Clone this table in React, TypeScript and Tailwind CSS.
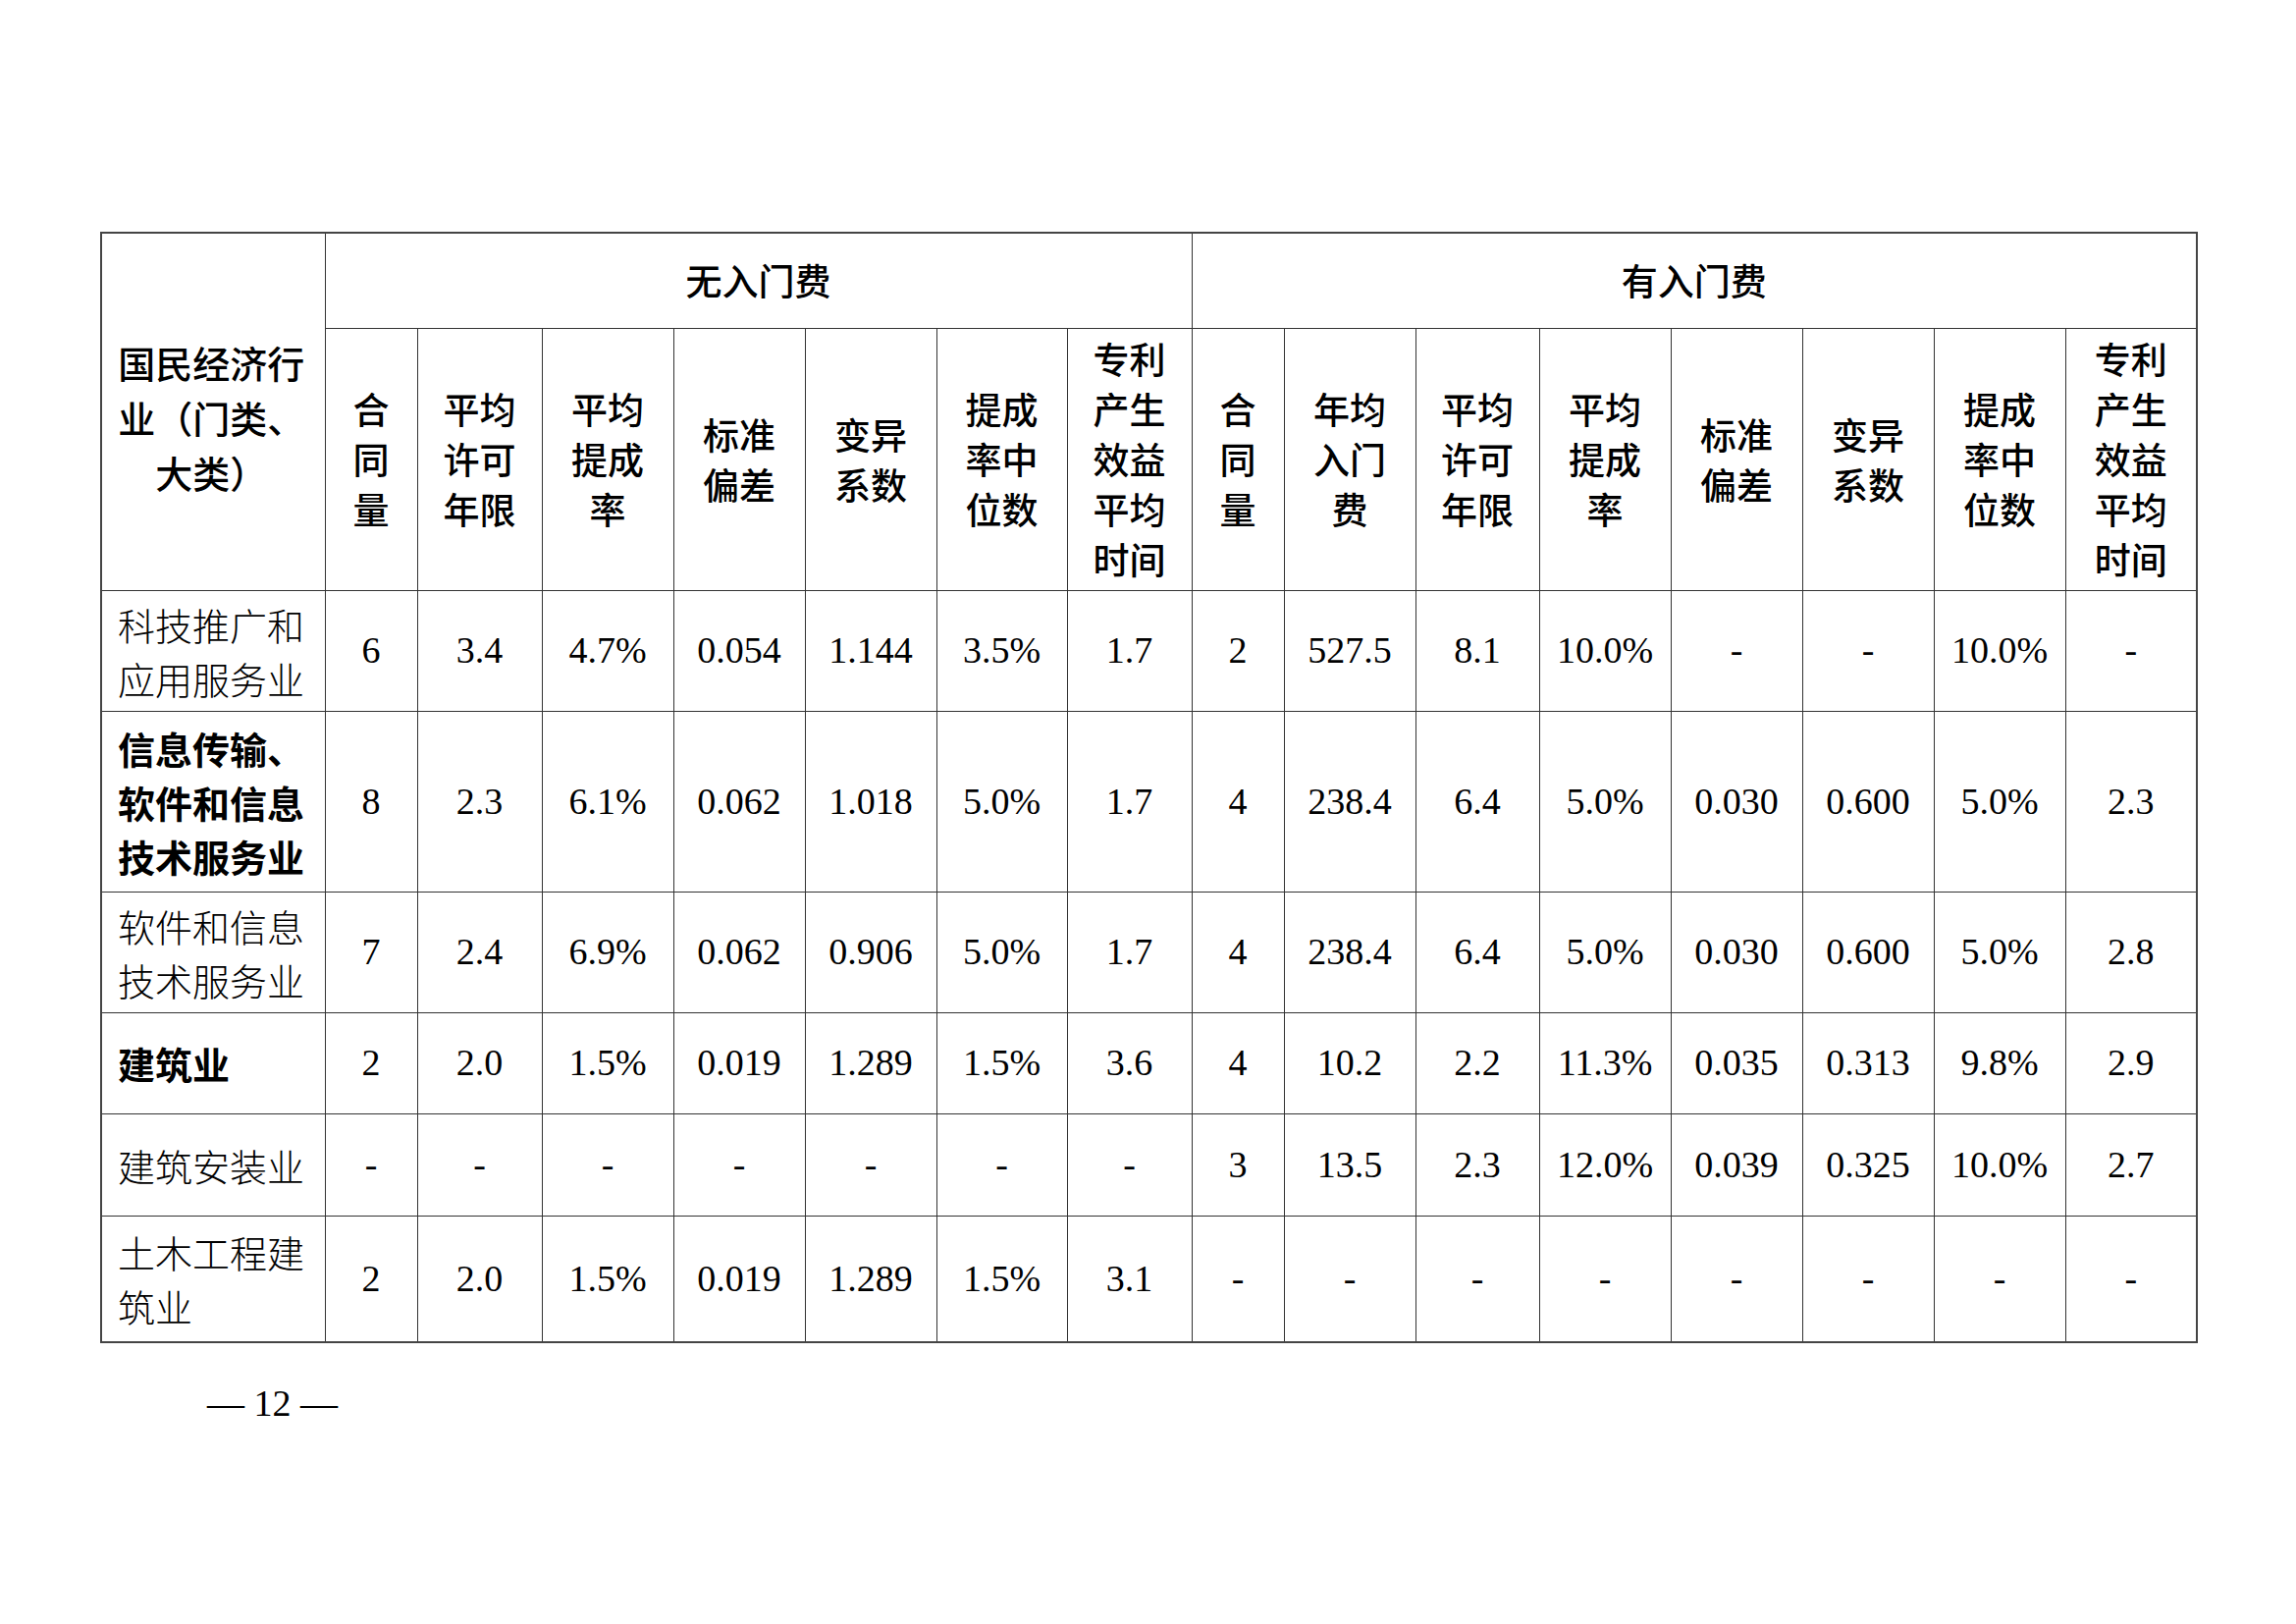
import React from 'react';

const cjk = { fontFamily: '"Noto Sans CJK SC", "Noto Sans", sans-serif' };
const serif = { fontFamily: '"Liberation Serif", "Noto Sans CJK SC", serif' };

const colWidths = [228, 94, 127, 134, 134, 134, 133, 127, 94, 134, 126, 134, 134, 134, 134, 134];

const noFeeHeads = [
  ['合', '同', '量'],
  ['平均', '许可', '年限'],
  ['平均', '提成', '率'],
  ['标准', '偏差'],
  ['变异', '系数'],
  ['提成', '率中', '位数'],
  ['专利', '产生', '效益', '平均', '时间'],
];

const feeHeads = [
  ['合', '同', '量'],
  ['年均', '入门', '费'],
  ['平均', '许可', '年限'],
  ['平均', '提成', '率'],
  ['标准', '偏差'],
  ['变异', '系数'],
  ['提成', '率中', '位数'],
  ['专利', '产生', '效益', '平均', '时间'],
];

interface Row {
  label: string[];
  bold: boolean;
  height: string;
  vals: string[];
}

const rows: Row[] = [
  {
    label: ['科技推广和', '应用服务业'],
    bold: false,
    height: 'h-[123px]',
    vals: ['6', '3.4', '4.7%', '0.054', '1.144', '3.5%', '1.7', '2', '527.5', '8.1', '10.0%', '-', '-', '10.0%', '-'],
  },
  {
    label: ['信息传输、', '软件和信息', '技术服务业'],
    bold: true,
    height: 'h-[184px]',
    vals: ['8', '2.3', '6.1%', '0.062', '1.018', '5.0%', '1.7', '4', '238.4', '6.4', '5.0%', '0.030', '0.600', '5.0%', '2.3'],
  },
  {
    label: ['软件和信息', '技术服务业'],
    bold: false,
    height: 'h-[123px]',
    vals: ['7', '2.4', '6.9%', '0.062', '0.906', '5.0%', '1.7', '4', '238.4', '6.4', '5.0%', '0.030', '0.600', '5.0%', '2.8'],
  },
  {
    label: ['建筑业'],
    bold: true,
    height: 'h-[103px]',
    vals: ['2', '2.0', '1.5%', '0.019', '1.289', '1.5%', '3.6', '4', '10.2', '2.2', '11.3%', '0.035', '0.313', '9.8%', '2.9'],
  },
  {
    label: ['建筑安装业'],
    bold: false,
    height: 'h-[104px]',
    vals: ['-', '-', '-', '-', '-', '-', '-', '3', '13.5', '2.3', '12.0%', '0.039', '0.325', '10.0%', '2.7'],
  },
  {
    label: ['土木工程建', '筑业'],
    bold: false,
    height: 'h-[129px]',
    vals: ['2', '2.0', '1.5%', '0.019', '1.289', '1.5%', '3.1', '-', '-', '-', '-', '-', '-', '-', '-'],
  },
];

const cell = 'border-[1.5px] border-[#333] p-0';

function HeadCell({ lines }: { lines: string[] }) {
  return (
    <th className={`${cell} text-center align-middle font-medium`}>
      <div className="text-[37px] leading-[51px] text-black" style={cjk}>
        {lines.map((l, i) => (
          <div key={i}>{l}</div>
        ))}
      </div>
    </th>
  );
}

export default function App() {
  return (
    <div className="w-[2339px] h-[1654px] bg-white pt-[236px] pl-[102px]">
      <table className="table-fixed border-collapse w-[2135px] border-2 border-[#444]">
        <colgroup>
          {colWidths.map((w, i) => (
            <col key={i} style={{ width: w }} />
          ))}
        </colgroup>
        <thead>
          <tr className="h-[97px]">
            <th rowSpan={2} className={`${cell} text-center align-middle font-medium`}>
              <div className="text-[38px] leading-[56px] text-black pt-[12px] pr-[4px]" style={cjk}>
                <div>国民经济行</div>
                <div>业（门类、</div>
                <div>大类）</div>
              </div>
            </th>
            <th colSpan={7} className={`${cell} text-center align-middle font-medium`}>
              <span className="text-[37px] text-black" style={cjk}>无入门费</span>
            </th>
            <th colSpan={8} className={`${cell} text-center align-middle font-medium`}>
              <span className="text-[37px] text-black" style={cjk}>有入门费</span>
            </th>
          </tr>
          <tr className="h-[267px]">
            {noFeeHeads.map((h, i) => (
              <HeadCell key={`n${i}`} lines={h} />
            ))}
            {feeHeads.map((h, i) => (
              <HeadCell key={`f${i}`} lines={h} />
            ))}
          </tr>
        </thead>
        <tbody>
          {rows.map((r, ri) => (
            <tr key={ri} className={r.height}>
              <td className={`${cell} align-middle text-left pl-[16px]`}>
                <div
                  className={`text-[38px] leading-[55px] text-black whitespace-nowrap ${r.bold ? 'font-bold' : 'font-light'}`}
                  style={cjk}
                >
                  {r.label.map((l, i) => (
                    <div key={i}>{l}</div>
                  ))}
                </div>
              </td>
              {r.vals.map((v, vi) => (
                <td key={vi} className={`${cell} align-middle text-center`}>
                  <span className="text-[38px] text-black" style={serif}>{v}</span>
                </td>
              ))}
            </tr>
          ))}
        </tbody>
      </table>

      <div className="mt-[42px] pl-[109px] text-[38px] leading-none text-black" style={serif}>
        — 12 —
      </div>
    </div>
  );
}
